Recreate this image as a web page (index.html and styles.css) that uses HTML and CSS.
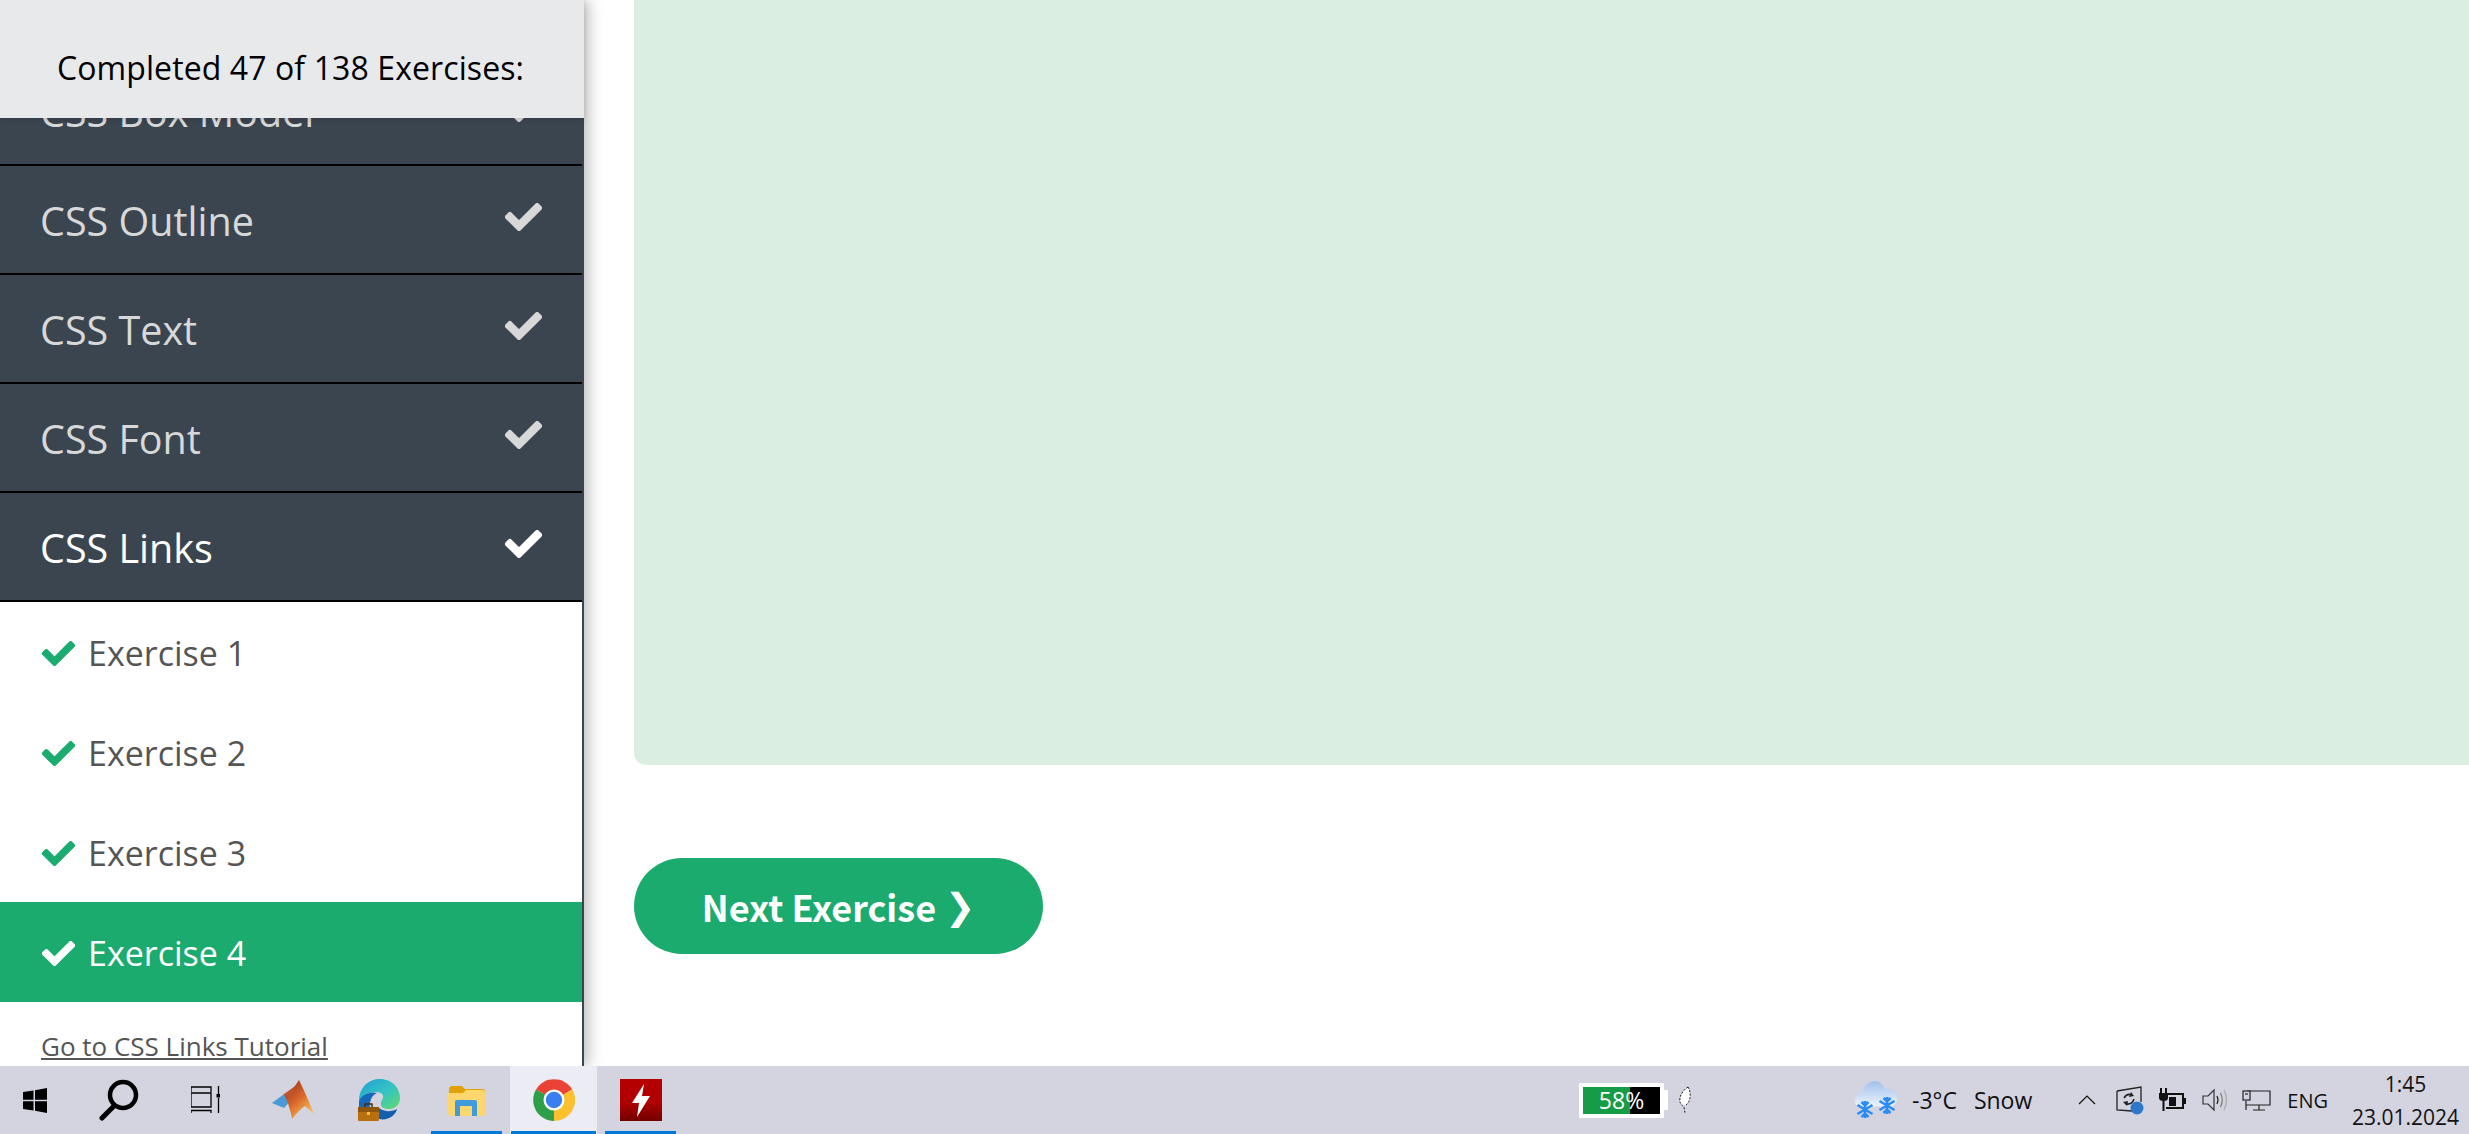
FILE: index.html
```html
<!DOCTYPE html>
<html lang="en">
<head>
    <meta charset="UTF-8">
    <title>CSS Links Exercise 4</title>
    <link rel="stylesheet" href="styles.css">
</head>
<body>
    <svg class="defs" width="0" height="0">
        <symbol id="tick" viewBox="-8 55 528 402" preserveAspectRatio="none">
            <path d="M173.9 439.4l-166.4-166.4c-10-10-10-26.2 0-36.2l36.2-36.2c10-10 26.2-10 36.2 0L192 312.7 432.1 72.6c10-10 26.2-10 36.2 0l36.2 36.2c10 10 10 26.2 0 36.2l-294.4 294.4c-10 10-26.2 10-36.2 0z" fill="currentColor" stroke="currentColor" stroke-width="18"/>
        </symbol>
    </svg>

    <div class="page">
        <aside class="sidebar">
            <div class="sidebar-head">Completed 47 of 138 Exercises:</div>
            <div class="sidebar-scroll">
                <ul class="chapters">
                    <li class="chapter">CSS Box Model <svg class="chapter-tick"><use href="#tick"/></svg></li>
                    <li class="chapter">CSS Outline <svg class="chapter-tick"><use href="#tick"/></svg></li>
                    <li class="chapter">CSS Text <svg class="chapter-tick"><use href="#tick"/></svg></li>
                    <li class="chapter">CSS Font <svg class="chapter-tick"><use href="#tick"/></svg></li>
                    <li class="chapter chapter-open">CSS Links <svg class="chapter-tick"><use href="#tick"/></svg></li>
                </ul>
                <ul class="exercises">
                    <li class="exercise"><svg class="exercise-tick"><use href="#tick"/></svg>Exercise 1</li>
                    <li class="exercise"><svg class="exercise-tick"><use href="#tick"/></svg>Exercise 2</li>
                    <li class="exercise"><svg class="exercise-tick"><use href="#tick"/></svg>Exercise 3</li>
                    <li class="exercise exercise-active"><svg class="exercise-tick"><use href="#tick"/></svg>Exercise 4</li>
                </ul>
                <a class="tutorial-link" href="#">Go to CSS Links Tutorial</a>
            </div>
        </aside>

        <main class="content">
            <div class="answer-panel"></div>
            <a class="next-btn" href="#">Next Exercise <span class="next-arrow">❯</span></a>
        </main>
    </div>

    <footer class="taskbar">
        <div class="task task-start">
            <svg width="24" height="25" viewBox="0 0 24 25"><path d="M0 4 L10.5 2.4 V11.8 H0 Z M12 2.2 L24 0 V11.8 H12 Z M0 13.2 H10.5 V22.6 L0 21 Z M12 13.2 H24 V25 L12 22.8 Z" fill="#000"/></svg>
        </div>
        <div class="task">
            <svg width="42" height="42" viewBox="0 0 42 42"><circle cx="25" cy="16" r="13" fill="none" stroke="#000" stroke-width="4.5"/><path d="M16 27 L4 39" stroke="#000" stroke-width="5" stroke-linecap="round"/></svg>
        </div>
        <div class="task">
            <svg width="30" height="28" viewBox="0 0 30 28"><path d="M0 1 H20 V6 M0 1 V6 M0 7 H20 V21 H0 Z M0 27 V24.5 H20 V27 M27.5 0 V8 M27.5 12 V27" fill="none" stroke="#000" stroke-width="1.3"/><rect x="25.5" y="8" width="3.5" height="3.5" fill="#000"/></svg>
        </div>
        <div class="task">
            <svg width="42" height="40" viewBox="0 0 42 40">
                <defs><linearGradient id="mlab" x1="0" y1="0" x2="0.7" y2="1"><stop offset="0" stop-color="#8f2a18"/><stop offset="0.55" stop-color="#d9662a"/><stop offset="1" stop-color="#f7c25a"/></linearGradient></defs>
                <path d="M0 23 L12 14 L19 20 L12 28 Z" fill="#4a9ad8"/>
                <path d="M12 14 Q20 12 27 0 Q34 14 42 34 L33 26 Q27 30 20 39 Q18 26 12 14 Z" fill="url(#mlab)"/>
                <path d="M12 14 L19 20 L22 7 Z" fill="#c0552a"/>
            </svg>
        </div>
        <div class="task">
            <svg width="43" height="42" viewBox="0 0 43 42">
                <defs><linearGradient id="edgeg" x1="0" y1="0" x2="1" y2="1"><stop offset="0" stop-color="#1f9ed8"/><stop offset="0.55" stop-color="#35c6c0"/><stop offset="1" stop-color="#62d96b"/></linearGradient></defs>
                <path d="M1 22 C1 8 11 0 22 0 C34 0 42 9 42 19 C42 27 36 30 30 30 C24 30 21 26 24 21 C27 17 24 13 19 13 C10 13 3 18 1 22 Z" fill="url(#edgeg)"/>
                <path d="M1 22 C3 16 12 12 19 14 C14 16 11 22 12 30 H1 Z" fill="#1668b8"/>
                <path d="M21 40 C30 42 38 36 39 30 C34 33 26 33 21 29 Z" fill="#125fb0"/>
                <rect x="0" y="28" width="21" height="14" rx="1" fill="#b8700f"/>
                <rect x="0" y="28" width="21" height="5" fill="#8f5608"/>
                <rect x="9" y="33" width="3" height="3" fill="#f2c037"/>
                <path d="M7 28 V25 H14 V28" fill="none" stroke="#4a2c08" stroke-width="1.5"/>
            </svg>
        </div>
        <div class="task task-running">
            <svg width="37" height="31" viewBox="0 0 37 31">
                <path d="M1 5 Q1 1 4 1 H14 L17 4 H34 Q37 4 37 7 V10 H1 Z" fill="#e0a208"/>
                <path d="M0 8 H15 L18 5 H34 Q37 5 37 8 V28 Q37 31 34 31 H3 Q0 31 0 28 Z" fill="#fdd66d"/>
                <path d="M7 31 V17 Q7 15 9 15 H27 Q29 15 29 17 V31 H24 V21 H12 V31 Z" fill="#3f9bdc"/>
            </svg>
        </div>
        <div class="task task-active">
            <svg width="42" height="42" viewBox="0 0 42 42">
                <path d="M21 21 L3 10.5 A21 21 0 0 1 39.2 10.5 Z" fill="#ea4335"/>
                <path d="M21 21 L39.2 10.5 A21 21 0 0 1 21 42 Z" fill="#fbc02d"/>
                <path d="M21 21 L21 42 A21 21 0 0 1 3 10.5 Z" fill="#2e9e48"/>
                <circle cx="21" cy="21" r="10.5" fill="#fff"/>
                <circle cx="21" cy="21" r="8.2" fill="#3a7ff0"/>
            </svg>
        </div>
        <div class="task task-running">
            <svg width="42" height="42" viewBox="0 0 42 42">
                <defs><linearGradient id="redg" x1="0" y1="0" x2="0" y2="1"><stop offset="0" stop-color="#b50000"/><stop offset="0.55" stop-color="#b00000"/><stop offset="1" stop-color="#740000"/></linearGradient></defs>
                <rect width="42" height="42" fill="url(#redg)"/>
                <path d="M24 5 L12 24 H19 L17 38 L30 17 H22 Z" fill="#fff"/>
            </svg>
        </div>

        <div class="battery-meter">
            <div class="battery-body"><span class="battery-fill"></span><span class="battery-text">58%</span></div>
            <span class="battery-cap"></span>
        </div>
        <svg class="leaf" width="12" height="28" viewBox="0 0 12 28"><path d="M9 1 C3 5 0 11 1 16 Q2 19 6 19 Q10 17 11 11 Q11 5 9 1 Z" fill="#fff"/><path d="M9 1 C3 5 0 11 1 16 Q2 19 5 21 L6 27 M9 1 Q12 6 11 12 Q10 17 7 19" fill="none" stroke="#111" stroke-width="1" stroke-dasharray="2 1.5"/></svg>

        <div class="weather">
            <svg width="44" height="38" viewBox="0 0 44 38">
                <defs><linearGradient id="cloudg" x1="0" y1="0" x2="0" y2="1"><stop offset="0" stop-color="#9fc2ee"/><stop offset="1" stop-color="#eef3fc"/></linearGradient></defs>
                <path d="M5 26 Q0 24 1 18 Q2 12 8 12 Q11 1 20 0 Q28 0 31 8 Q40 7 43 15 Q44 23 38 25 Z" fill="url(#cloudg)"/>
                <g stroke="#2a8cf2" stroke-width="2.6" fill="none">
                    <path d="M11 20 V37 M3.5 24 L18.5 33 M18.5 24 L3.5 33 M7.5 21 L11 24.5 L14.5 21 M7.5 36 L11 32.5 L14.5 36"/>
                    <path d="M33 16 V33 M25.5 20 L40.5 29 M40.5 20 L25.5 29 M29.5 17 L33 20.5 L36.5 17 M29.5 32 L33 28.5 L36.5 32"/>
                </g>
            </svg>
            <span class="weather-temp">-3°C</span>
            <span class="weather-text">Snow</span>
        </div>

        <div class="tray">
            <svg class="tray-chevron" width="18" height="10" viewBox="0 0 18 10"><path d="M1 9 L9 1 L17 9" fill="none" stroke="#111" stroke-width="1.2"/></svg>
            <svg class="tray-sync" width="28" height="29" viewBox="0 0 28 29">
                <path d="M1 5 L25 1 V16 M1 5 V24 L16 25" fill="none" stroke="#222" stroke-width="1.3"/>
                <path d="M8 12 Q11 7 16 9 M18 13 Q16 19 10 18" fill="none" stroke="#222" stroke-width="1.6"/>
                <path d="M15 6 L18 10 L13 11 Z M7 16 L12 15 L11 20 Z" fill="#222"/>
                <circle cx="21" cy="22" r="6.5" fill="#2f78c8"/>
            </svg>
            <svg class="tray-power" width="28" height="24" viewBox="0 0 28 24">
                <path d="M3 0 V5 M8 0 V5 M5.5 13 V23" fill="none" stroke="#111" stroke-width="2"/>
                <path d="M1 5 H10 V10 Q10 13 5.5 13 Q1 13 1 10 Z" fill="#111"/>
                <path d="M10 6 H25 V20 H8" fill="none" stroke="#111" stroke-width="2"/>
                <rect x="11" y="9" width="7" height="9" fill="#111"/>
                <rect x="25" y="10" width="3" height="6" fill="#111"/>
            </svg>
            <svg class="tray-volume" width="26" height="26" viewBox="0 0 26 26">
                <path d="M1 9 H6 L12 3 V23 L6 17 H1 Z" fill="none" stroke="#333" stroke-width="1.2"/>
                <path d="M15 9 Q17 13 15 17" fill="none" stroke="#222" stroke-width="1.2"/>
                <path d="M18.5 6 Q22 13 18.5 20" fill="none" stroke="#777" stroke-width="1.2"/>
                <path d="M22 3 Q27 13 22 23" fill="none" stroke="#aaa" stroke-width="1.2"/>
            </svg>
            <svg class="tray-net" width="29" height="21" viewBox="0 0 29 21">
                <path d="M5 1 H28 V15 H4 M4 11 V20 M17 15 V20 M11 20 H23" fill="none" stroke="#222" stroke-width="1.2"/>
                <rect x="1" y="1" width="7" height="9" fill="#d3d4e0" stroke="#222" stroke-width="1.2"/>
                <path d="M3 4 H6" stroke="#222" stroke-width="1.2"/>
            </svg>
            <span class="tray-lang">ENG</span>
            <div class="clock"><span>1:45</span><span>23.01.2024</span></div>
        </div>
    </footer>
</body>
</html>
```

FILE: styles.css
```css
* {
    box-sizing: border-box;
}

body {
    margin: 0;
    height: 1134px;
    overflow: hidden;
    background-color: #fff;
    font-family: "Open Sans", "Noto Sans", sans-serif;
}

.defs {
    position: absolute;
}

ul {
    list-style: none;
    margin: 0;
    padding: 0;
}

.page {
    display: flex;
    height: 1066px;
    overflow: hidden;
}

/* sidebar */
.sidebar {
    position: relative;
    flex: 0 0 584px;
    display: flex;
    flex-direction: column;
    box-shadow: 4px 0 14px rgba(0, 0, 0, 0.28);
    border-right: 2px solid #3b4550;
    z-index: 2;
}

.sidebar-head {
    position: relative;
    z-index: 1;
    flex: 0 0 118px;
    padding: 46px 3px 0 0;
    text-align: center;
    font-size: 32px;
    line-height: 44px;
    letter-spacing: 0.1px;
    color: #000;
    background-color: #e8e9eb;
    box-shadow: 0 2px 5px rgba(0, 0, 0, 0.12);
    margin-right: -2px;
}

.sidebar-scroll {
    flex: 1;
    overflow: hidden;
    background-color: #fff;
}

.chapters {
    margin-top: -61px;
}

.chapter {
    display: flex;
    justify-content: space-between;
    align-items: center;
    height: 109px;
    padding: 3px 40px 0 40px;
    font-size: 39.5px;
    color: #d8d8d8;
    background-color: #3b4550;
    border-bottom: 2px solid #000;
}

.chapter-open {
    color: #fff;
}

.chapter-tick {
    width: 37px;
    height: 28px;
    margin-top: -8px;
}

.exercise {
    display: flex;
    align-items: center;
    height: 100px;
    padding: 2px 0 0 42px;
    font-size: 34px;
    color: #555;
}

.exercise-tick {
    width: 33px;
    height: 25px;
    margin-right: 13px;
    color: #1bab6f;
}

.exercise-active {
    color: #fff;
    background-color: #1bab6f;
}

.exercise-active .exercise-tick {
    color: #fff;
}

.tutorial-link {
    display: block;
    margin: 26px 0 0 41px;
    font-size: 26px;
    color: #555;
}

/* main area */
.content {
    flex: 1;
    padding-left: 49px;
}

.answer-panel {
    height: 765px;
    margin-left: 1px;
    background-color: #dbeee2;
    border-radius: 0 0 0 12px;
}

.next-btn {
    display: flex;
    align-items: center;
    justify-content: center;
    gap: 9px;
    width: 409px;
    height: 96px;
    margin: 93px 0 0 1px;
    border-radius: 48px;
    font-family: "Noto Sans CJK SC", "Open Sans", sans-serif;
    font-size: 36px;
    font-weight: 700;
    color: #fff;
    text-decoration: none;
    background-color: #1bab6f;
}

.next-arrow {
    font-family: "DejaVu Sans", sans-serif;
    font-size: 36px;
    font-weight: 400;
}

/* windows taskbar */
.taskbar {
    display: flex;
    align-items: center;
    height: 68px;
    background-color: #d3d4e0;
    color: #111;
    font-size: 23px;
}

.task {
    position: relative;
    flex: 0 0 87px;
    height: 68px;
    display: flex;
    align-items: center;
    justify-content: center;
}

.task-start {
    flex-basis: 75px;
    padding-right: 5px;
}

.task-running::after,
.task-active::after {
    content: "";
    position: absolute;
    left: 8px;
    right: 8px;
    bottom: 0;
    height: 3px;
    background-color: #0078d7;
}

.task-active {
    background-color: #ecedf4;
}

.task-active::after {
    left: 1px;
    right: 1px;
}

.battery-meter {
    display: flex;
    align-items: center;
    margin-left: 895px;
}

.battery-body {
    position: relative;
    width: 85px;
    height: 35px;
    border: 4px solid #fff;
    background-color: #000;
    display: flex;
    align-items: center;
    justify-content: center;
}

.battery-fill {
    position: absolute;
    left: 0;
    top: 0;
    bottom: 0;
    width: 47px;
    background-color: #169c47;
}

.battery-text {
    position: relative;
    color: #fff;
    font-size: 23px;
}

.battery-cap {
    width: 4px;
    height: 20px;
    background-color: #fff;
}

.leaf {
    margin-left: 11px;
}

.weather {
    display: flex;
    align-items: center;
    margin-left: 163px;
}

.weather-temp {
    margin-left: 14px;
}

.weather-text {
    margin-left: 17px;
}

.tray {
    display: flex;
    align-items: center;
    margin-left: 46px;
}

.tray-sync {
    margin-left: 20px;
}

.tray-power {
    margin-left: 14px;
}

.tray-volume {
    margin-left: 16px;
}

.tray-net {
    margin-left: 14px;
}

.tray-lang {
    margin-left: 16px;
    font-size: 20px;
}

.clock {
    display: flex;
    flex-direction: column;
    align-items: center;
    margin-left: 24px;
    padding-top: 2px;
    font-size: 21px;
    line-height: 33px;
}
```
